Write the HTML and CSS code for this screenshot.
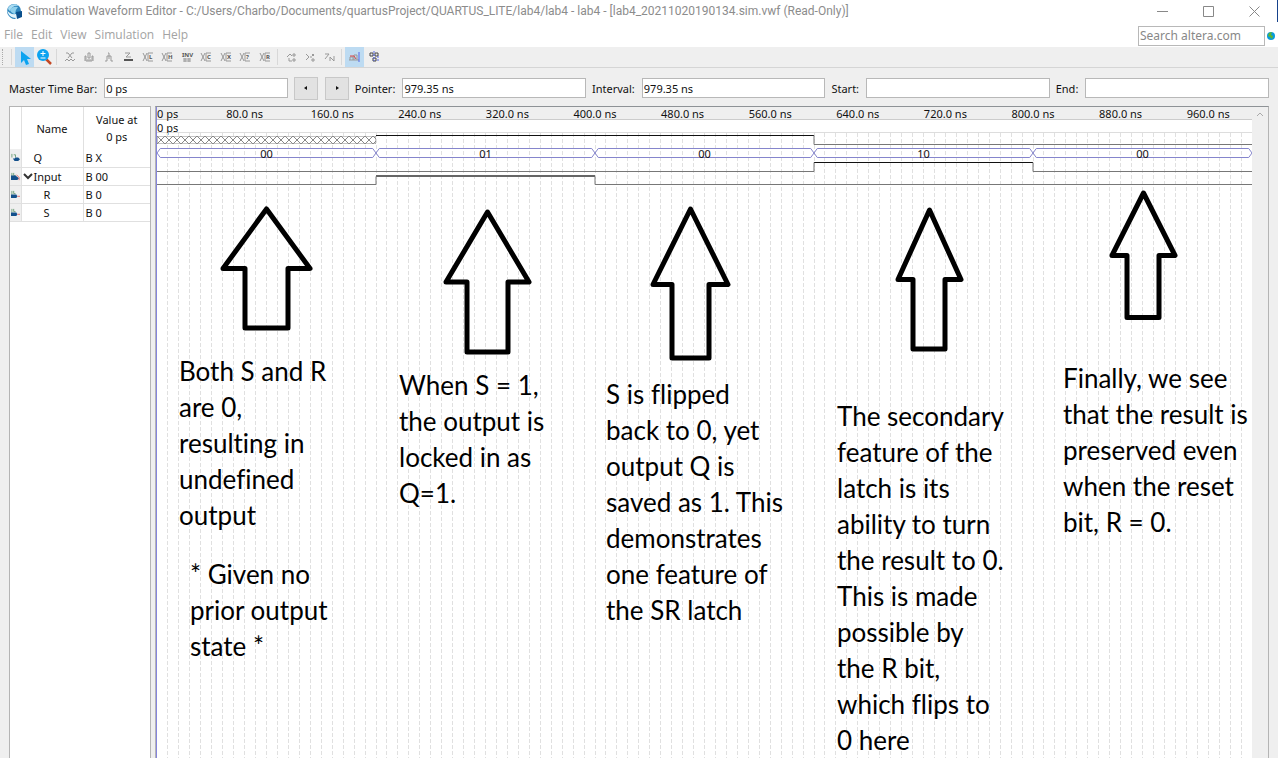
FILE: index.html
```
<!DOCTYPE html>
<html lang="en">
<head>
<meta charset="utf-8">
<title>Simulation Waveform Editor</title>
<link rel="stylesheet" href="styles.css">
</head>
<body>
<header class="titlebar">
  <svg class="app-icon" viewBox="0 0 17 17" aria-hidden="true"><circle cx="8" cy="8" r="7" fill="#2e86bd"/><path d="M2 5C4 1 10 0 13 3C9 2 5 4 4 8Q2 7 2 5Z" fill="#a9dcf2"/><path d="M4 7Q6 3 12 4Q9 7 9 11Q5 10 4 7Z" fill="#8fd0ec"/><path d="M1 7Q4 12 10 11L12 15Q4 18 1 7Z" fill="#e3f3fa"/><path d="M2 11Q5 15 10 15L9 16Q4 16 2 11Z" fill="#2e86bd"/><path d="M10 9 16 8 16 14 11 16Z" fill="#0a4f8c"/></svg>
  <h1 class="title">Simulation Waveform Editor - C:/Users/Charbo/Documents/quartusProject/QUARTUS_LITE/lab4/lab4 - lab4 - [lab4_20211020190134.sim.vwf (Read-Only)]</h1>
  <div class="window-buttons">
    <button aria-label="Minimize"><svg viewBox="0 0 11 11"><path d="M0 5.500h11"/></svg></button>
    <button aria-label="Maximize"><svg viewBox="0 0 11 11"><path d="M.5.500h10v10H.5z"/></svg></button>
    <button aria-label="Close"><svg viewBox="0 0 11 11"><path d="m.5.500 10 10m0-10-10 10"/></svg></button>
  </div>
</header>
<div class="menubar">
  <nav class="menus"><button>File</button><button>Edit</button><button>View</button><button>Simulation</button><button>Help</button></nav>
  <form class="search"><input type="text" aria-label="Search altera.com" placeholder="Search altera.com"><svg viewBox="0 0 8 8" aria-hidden="true"><circle cx="4" cy="4" r="4" fill="#079bdd"/><path d="M2 1 5 0 4 3l2 1-1 3-2-2-2-1Z" fill="#62b52f"/></svg></form>
</div>
<div class="toolbar" role="toolbar" aria-label="Waveform tools">
  <span class="grip"></span><span class="sep"></span>
  <button class="tool active" aria-label="Selection tool"><svg viewBox="0 0 18 18"><path d="M5 3v12l3-3 2 5 3-1-2-5h4Z" fill="#0ba3f0"/></svg></button>
  <button class="tool" aria-label="Zoom tool"><svg viewBox="0 0 18 18"><path d="m11 11 5 5" stroke="#c44824" stroke-width="2.500"/><circle cx="8" cy="7" r="6" fill="#0ba3f0"/><path d="M8 3v5M5.500 5.500h5M5.500 10h5" stroke="#fff"/></svg></button>
  <span class="sep"></span>
  <div class="tools edit-tools">
    <button class="tool" aria-label="Forcing unknown"><svg viewBox="0 0 18 18"><path class="s" d="m7 5 4 5m0-5-4 5M5 5h2m4 0h2M4 13l2-2 2 2 2-2 2 2 2-2"/></svg></button>
    <button class="tool" aria-label="Forcing low"><svg viewBox="0 0 18 18"><path class="s" d="M5 13V8h1v5h6V8h1v5M8 5h2v5H8zM7 12h4"/></svg></button>
    <button class="tool" aria-label="Forcing high"><svg viewBox="0 0 18 18"><path class="s" d="M5 13h2V8h4v5h2M8 5h1v6"/></svg></button>
    <button class="tool" aria-label="High impedance"><svg viewBox="0 0 18 18"><path class="s" d="M6 5h5L7 9h5"/><path d="M5 12h9" stroke="#555" stroke-width="2"/></svg></button>
    <button class="tool" aria-label="Weak low"><svg viewBox="0 0 18 18"><path class="s" d="M4 5 8 13M8 5 4 13M14 5H9v8h5"/><text x="10" y="11">L</text></svg></button>
    <button class="tool" aria-label="Weak high"><svg viewBox="0 0 18 18"><path class="s" d="M4 5 8 13M8 5 4 13M14 5H9v8h5"/><text x="10" y="11">H</text></svg></button>
    <button class="tool" aria-label="Invert"><svg viewBox="0 0 18 18"><text x="4" y="9">INV</text><path class="s" d="M5 11h8M5 13h8M7 10v4m4-4v4"/></svg></button>
    <button class="tool" aria-label="Count value"><svg viewBox="0 0 18 18"><path class="s" d="M4 5 8 13M8 5 4 13M14 5H9v8h5"/><text x="10" y="11">C</text></svg></button>
    <button class="tool" aria-label="Overwrite clock"><svg viewBox="0 0 18 18"><path class="s" d="M4 5 8 13M8 5 4 13M14 5H9v8h5"/><text x="10" y="11">X</text></svg></button>
    <button class="tool" aria-label="Arbitrary value"><svg viewBox="0 0 18 18"><path class="s" d="M4 5 8 13M8 5 4 13M14 5H9v8h5"/><text x="10" y="11">?</text></svg></button>
    <button class="tool" aria-label="Random values"><svg viewBox="0 0 18 18"><path class="s" d="M4 5 8 13M8 5 4 13M14 5H9v8h5"/><text x="10" y="11">R</text></svg></button>
  </div>
  <span class="sep"></span>
  <div class="tools run-tools">
    <button class="tool" aria-label="Run functional simulation"><svg viewBox="0 0 18 18"><path class="s" d="m5 9 3-3 2 2m-3 2v3h3M11 6h2v2h-2zM11 11h2v2h-2z"/></svg></button>
    <button class="tool" aria-label="Run timing simulation"><svg viewBox="0 0 18 18"><path class="s" d="m5 6 3 3-3 3m4-3h2m0-3 2 2m0-2-2 2m0 3h2v2h-2z"/></svg></button>
    <button class="tool" aria-label="Generate testbench"><svg viewBox="0 0 18 18"><path class="s" d="M5 6h4L5 11m5-2v4m0-4 4 4V8"/></svg></button>
  </div>
  <span class="sep"></span>
  <button class="tool active" aria-label="Snap to grid"><svg viewBox="0 0 18 18"><path class="s" d="M4 12V9h3v3m1 0V7h3v5m-8 0h10"/><path d="M4 8h4l2 3" stroke="#d44" fill="none"/><path d="M13 4v10" stroke="#5267e8"/></svg></button>
  <button class="tool" aria-label="Snap to transition"><svg viewBox="0 0 18 18"><path d="M5 5h3v3H5zM10 5h3v3h-3zM8 10h3v3H8z" stroke="#444" fill="none"/><path d="M9 3v10M13 8v6" stroke="#5267e8" stroke-dasharray="2 1"/></svg></button>
</div>
<form class="timebar">
  <label for="master">Master Time Bar:</label><input id="master" type="text" value="0 ps">
  <button type="button" aria-label="Previous transition"><svg viewBox="0 0 6 6"><path d="M4 1 1 3l3 2Z"/></svg></button>
  <button type="button" aria-label="Next transition"><svg viewBox="0 0 6 6"><path d="m2 1 3 2-3 2Z"/></svg></button>
  <label for="pointer">Pointer:</label><input id="pointer" type="text" value="979.35 ns">
  <label for="interval">Interval:</label><input id="interval" type="text" value="979.35 ns">
  <label for="start">Start:</label><input id="start" type="text">
  <label for="end">End:</label><input id="end" type="text">
</form>
<main class="workspace">
  <section class="signals">
    <table>
      <colgroup><col class="c-icon"><col class="c-name"><col></colgroup>
      <thead><tr><th></th><th>Name</th><th>Value at<br>0 ps</th></tr></thead>
      <tbody>
        <tr><td><svg viewBox="0 0 10 10"><path d="M1 1v4M3 2h2v3" stroke="#6a9d75"/><path d="M2 6h2l1-1h3l2 2-2 2H4Z" fill="#13508b"/></svg></td><td>Q</td><td>B X</td></tr>
        <tr><td><svg viewBox="0 0 10 10"><path d="M1 1v4M3 1v3h2" stroke="#6a9d75"/><path d="M0 4h5l4 3-2 2H0Z" fill="#13508b"/><path d="m6 3 3 3v3" stroke="#d66"/></svg></td><td><svg class="chevron" viewBox="0 0 10 10"><path d="m1 3 4 4 4-4"/></svg>Input</td><td>B 00</td></tr>
        <tr><td><svg viewBox="0 0 10 10"><path d="M1 1v4M3 1v3h2" stroke="#6a9d75"/><path d="M0 5h6l1 2-1 2H0Z" fill="#13508b"/><path d="M7 7h3" stroke="#d66"/></svg></td><td class="child">R</td><td>B 0</td></tr>
        <tr><td><svg viewBox="0 0 10 10"><path d="M1 1v4M3 1v3h2" stroke="#6a9d75"/><path d="M0 5h6l1 2-1 2H0Z" fill="#13508b"/><path d="M7 7h3" stroke="#d66"/></svg></td><td class="child">S</td><td>B 0</td></tr>
      </tbody>
    </table>
  </section>
  <section class="waves">
    <div class="plot">
      <div class="ruler"><span>0 ps</span><span>80.0 ns</span><span>160.0 ns</span><span>240.0 ns</span><span>320.0 ns</span><span>400.0 ns</span><span>480.0 ns</span><span>560.0 ns</span><span>640.0 ns</span><span>720.0 ns</span><span>800.0 ns</span><span>880.0 ns</span><span>960.0 ns</span></div>
      <div class="cursor-row">0 ps</div>
      <div class="canvas">
        <svg class="gridlines" aria-hidden="true"></svg>
        <svg class="traces" viewBox="0 133 1000 60" preserveAspectRatio="none" aria-hidden="true">
          <path class="high" d="M200 135.500H600M600 162.500H800"/>
          <path class="mid" d="M200 176H400"/>
          <path class="low" d="M600 135.500V144.500H1000M0 171.500H600V162.500M800 162.500V171.500H1000M0 184.500H200V176.500M400 176.500V184.500H1000"/>
          <path class="bus" d="M0 153 3 148.500H197L203 157.500H397L403 148.500H597L603 157.500H797L803 148.500H997L1000 153L997 157.500H803L797 148.500H603L597 157.500H403L397 148.500H203L197 157.500H3Z"/>
        </svg>
        <svg class="hatch" aria-hidden="true"><defs><pattern id="x" width="8" height="8" patternUnits="userSpaceOnUse"><path d="m0 0 8 8m0-8-8 8"/></pattern></defs><rect width="100%" height="100%" fill="url(#x)"/></svg>
        <div class="bus-values"><span>00</span><span>01</span><span>00</span><span>10</span><span>00</span></div>
      </div>
      <svg class="arrows" viewBox="157 107 1094 651" aria-hidden="true">
        <path d="M266.500 209 310 268.500H288V328H245V268.500H223Z"/>
        <path d="M487.500 212 529 282H508V352H467V282H446Z"/>
        <path d="M690.500 209 728 284.500H709V358H672V284.500H653Z"/>
        <path d="M929.500 210 961 279.500H945V349H913V279.500H898Z"/>
        <path d="M1143.500 193 1175 255.500H1159V317.500H1127V255.500H1112Z"/>
      </svg>
      <p class="note n1">Both S and R<br>are 0,<br>resulting in<br>undefined<br>output</p>
      <p class="note n2">* Given no<br>prior output<br>state *</p>
      <p class="note n3">When S = 1,<br>the output is<br>locked in as<br>Q=1.</p>
      <p class="note n4">S is flipped<br>back to 0, yet<br>output Q is<br>saved as 1. This<br>demonstrates<br>one feature of<br>the SR latch</p>
      <p class="note n5">The secondary<br>feature of the<br>latch is its<br>ability to turn<br>the result to 0.<br>This is made<br>possible by<br>the R bit,<br>which flips to<br>0 here</p>
      <p class="note n6">Finally, we see<br>that the result is<br>preserved even<br>when the reset<br>bit, R = 0.</p>
    </div>
    <div class="scrollbar"><svg viewBox="0 0 8 8"><path d="m1 5 3-3 3 3"/></svg></div>
  </section>
</main>
<script src="grid.js"></script>
</body>
</html>
```
FILE: styles.css
```
* { box-sizing: border-box; }
body { margin: 0; height: 100vh; overflow: hidden; display: flex; flex-direction: column; background: #efefef; color: #111; font-family: "Noto Sans", "Open Sans", sans-serif; font-size: 11px; }
button, input { font: inherit; color: inherit; }
button { border: 0; padding: 0; background: none; }
svg { display: block; fill: none; }
.titlebar { display: flex; align-items: center; height: 22px; padding-left: 6px; gap: 5px; background: #fff; border-right: 1px solid #16428c; flex: none; }
.app-icon { width: 17px; height: 17px; }
.title { flex: 1; margin: 0; color: #8c8c8c; font-family: Roboto, sans-serif; font-size: 12px; font-weight: 400; white-space: nowrap; }
.window-buttons { display: flex; }
.window-buttons button { width: 46px; display: flex; justify-content: center; }
.window-buttons svg { width: 11px; height: 11px; stroke: #888; }
.menubar { display: flex; justify-content: space-between; align-items: center; height: 25px; background: #fff; flex: none; }
.menus { display: flex; gap: 8px; padding-left: 4px; color: #a3a3a3; font-family: "Open Sans", sans-serif; font-size: 12px; }
.search { display: flex; align-items: center; gap: 2px; padding: 2px 3px 0 0; }
.search input { width: 127px; height: 20px; font-size: 12px; }
.search input::placeholder { color: #888; }
.search svg { width: 8px; height: 8px; }
.toolbar { display: flex; align-items: center; height: 21px; border-bottom: 1px solid #d5d5d5; flex: none; }
.grip { width: 2px; height: 16px; margin-left: 2px; border-left: 1px dotted #aaa; }
.sep { width: 1px; height: 16px; background: #d8d8d8; margin: 0 3px; }
.grip + .sep { margin-left: 7px; }
.tool { width: 19px; height: 20px; display: flex; align-items: center; justify-content: center; flex: none; }
.tool svg { width: 18px; height: 18px; }
.tool .s { stroke: #999; }
.tool text { fill: #555; font-size: 6px; font-weight: 700; }
.active { background: #bddbf2; }
.tools { display: flex; justify-content: space-between; }
.edit-tools { width: 214px; }
.run-tools { width: 57px; }
input { min-width: 0; height: 20px; border: 1px solid #b8b8b8; background: #fff; padding: 0 1px; border-radius: 0; }
.timebar { display: flex; align-items: center; gap: 6px; height: 38px; padding: 2px 9px 0; flex: none; }
.timebar label { padding-right: 1px; }
.timebar input { flex: 1; }
.timebar button { width: 24px; height: 23px; border: 1px solid #c8c8c8; background: #e2e2e2; display: flex; align-items: center; justify-content: center; }
.timebar button svg { width: 6px; height: 6px; fill: #111; }
.timebar button + button { margin-left: 1px; }
.workspace { display: flex; flex: 1; min-height: 0; gap: 4px; padding: 0 9px; }
.signals { width: 142px; background: #fff; border: 1px solid #b4b4b4; border-bottom: 0; flex: none; }
table { width: 100%; border-collapse: collapse; table-layout: fixed; }
.c-icon { width: 11px; }
.c-name { width: 62px; }
th { height: 42px; padding: 0; font-weight: 400; line-height: 17px; border-left: 1px solid #e0e0e0; }
td { height: 18px; padding: 0 0 0 2px; line-height: 17px; border: 1px solid #e0e0e0; border-right: 0; white-space: nowrap; }
th:first-child, td:first-child { border-left: 0; }
tbody tr:first-child td { border-top: 0; }
td:first-child { padding: 0; background: #efefef; }
td:nth-child(2) { padding-left: 12px; }
td svg { width: 9px; height: 9px; margin-left: 1px; }
td:nth-child(2).child { padding-left: 22px; }
td .chevron { float: left; width: 10px; height: 10px; margin: 3px 1px 0 -11px; stroke: #333; stroke-width: 2; }
.waves { display: flex; flex: 1; min-width: 0; border: 1px solid #b4b4b4; border-top-color: #8e9296; border-bottom: 0; }
.plot { position: relative; flex: 1; background: #fff; border-left: 1px solid #8585dd; }
.ruler { display: grid; grid-template-columns: 4fr repeat(12, 8fr); height: 13px; line-height: 13px; background: #efefef; border-bottom: 1px solid #ccc; text-align: center; white-space: nowrap; }
.ruler span:first-child { text-align: left; }
.cursor-row { height: 13px; line-height: 16px; border-bottom: 1px solid #ddd; }
.canvas { position: relative; height: calc(100% - 26px); }
.gridlines { position: absolute; width: 100%; height: 100%; }
.gridlines line { stroke: #e0e0e0; stroke-dasharray: 4 2; shape-rendering: crispEdges; }
.traces { position: absolute; width: 100%; height: 60px; }
.traces path { vector-effect: non-scaling-stroke; }
.high { stroke: #111; }
.mid { stroke: #666; stroke-width: 2; }
.low { stroke: #777; }
.bus { stroke: #8585cc; }
.hatch { position: absolute; top: 3px; width: 20%; height: 8px; background: #fff; stroke: #888; }
.bus-values { position: relative; display: grid; grid-template-columns: repeat(5, 1fr); padding-top: 13px; line-height: 16px; text-align: center; }
.arrows { position: absolute; left: 0; top: 0; width: 1094px; height: 651px; stroke: #000; stroke-width: 5; stroke-linejoin: round; }
.note { position: absolute; margin: 0; color: #000; font-family: Lato, sans-serif; font-size: 26px; line-height: 36px; font-variant-ligatures: none; white-space: nowrap; }
.n1 { left: 22px; top: 246px; }
.n2 { left: 33px; top: 449px; }
.n3 { left: 242px; top: 260px; }
.n4 { left: 449px; top: 269px; }
.n5 { left: 680px; top: 291px; }
.n6 { left: 906px; top: 253px; }
.scrollbar { width: 16px; padding: 4px; flex: none; }
.scrollbar svg { width: 8px; height: 8px; stroke: #aaa; }
```
FILE: grid.js
```
const grid = document.querySelector('.gridlines');
for (let i = 1; i < 100; i++) {
  const line = document.createElementNS('http://www.w3.org/2000/svg', 'line');
  line.setAttribute('x1', i + '%');
  line.setAttribute('x2', i + '%');
  line.setAttribute('y1', '0');
  line.setAttribute('y2', '100%');
  grid.append(line);
}
```
